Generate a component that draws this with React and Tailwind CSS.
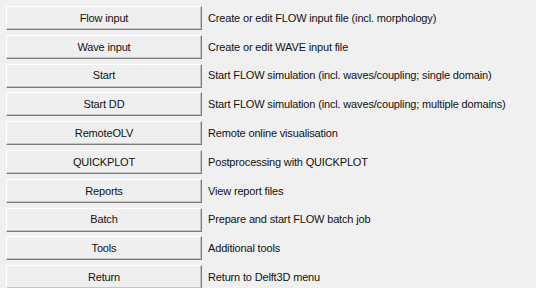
const rows = [
  { label: "Flow input", desc: "Create or edit FLOW input file (incl. morphology)" },
  { label: "Wave input", desc: "Create or edit WAVE input file" },
  { label: "Start", desc: "Start FLOW simulation (incl. waves/coupling; single domain)" },
  { label: "Start DD", desc: "Start FLOW simulation (incl. waves/coupling; multiple domains)" },
  { label: "RemoteOLV", desc: "Remote online visualisation" },
  { label: "QUICKPLOT", desc: "Postprocessing with QUICKPLOT" },
  { label: "Reports", desc: "View report files" },
  { label: "Batch", desc: "Prepare and start FLOW batch job" },
  { label: "Tools", desc: "Additional tools" },
  { label: "Return", desc: "Return to Delft3D menu" },
];

export default function App() {
  return (
    <div
      className="w-[536px] h-[288px] overflow-hidden bg-[#f0f0f0] pt-[6px] pl-[6px] text-[11px] text-[#111] tracking-[-0.16px]"
      style={{ fontFamily: "Tahoma, 'Liberation Sans', Arial, sans-serif" }}
    >
      {rows.map((r) => (
        <div key={r.label} className="flex items-start h-[28.8px]">
          <button className="w-[196px] h-[24px] flex items-center justify-center bg-[#efefef] border-t border-l border-t-white border-l-white border-r border-b border-r-[#7a7a7a] border-b-[#7a7a7a] shadow-[inset_-1px_-1px_0_#c4c4c4]">
            {r.label}
          </button>
          <div className="h-[24px] flex items-center pl-[6px]">{r.desc}</div>
        </div>
      ))}
    </div>
  );
}
